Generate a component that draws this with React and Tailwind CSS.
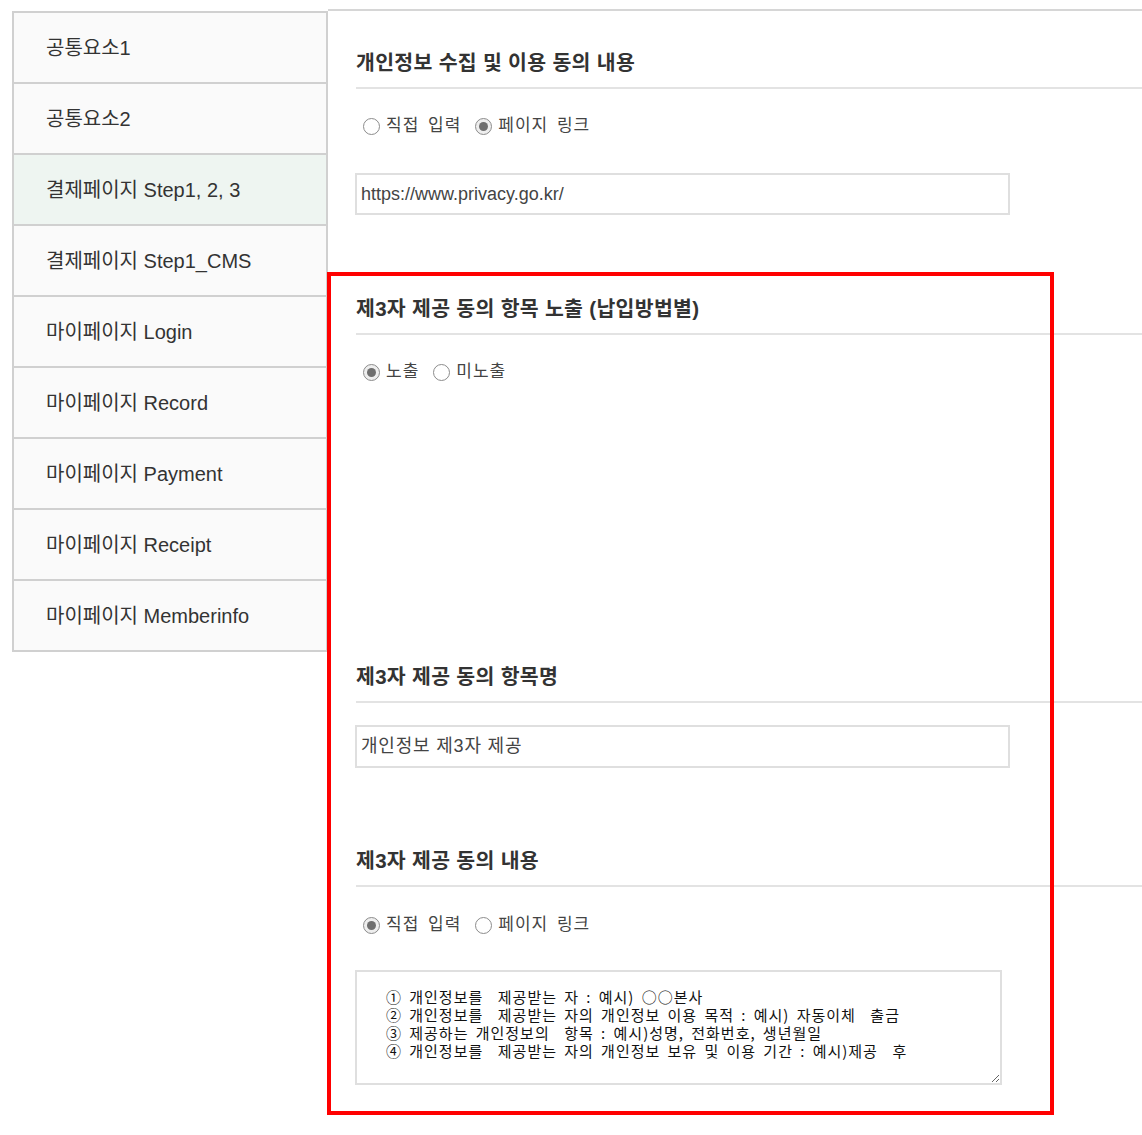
const NAV_ITEMS = [
  "공통요소1",
  "공통요소2",
  "결제페이지 Step1, 2, 3",
  "결제페이지 Step1_CMS",
  "마이페이지 Login",
  "마이페이지 Record",
  "마이페이지 Payment",
  "마이페이지 Receipt",
  "마이페이지 Memberinfo",
];

const CONSENT_TEXT = [
  "① 개인정보를  제공받는 자 : 예시) ○○본사",
  "② 개인정보를  제공받는 자의 개인정보 이용 목적 : 예시) 자동이체  출금",
  "③ 제공하는 개인정보의  항목 : 예시)성명, 전화번호, 생년월일",
  "④ 개인정보를  제공받는 자의 개인정보 보유 및 이용 기간 : 예시)제공  후",
].join("\n");

// Grey native-looking radio
function Radio({ checked, label }) {
  return (
    <label className="flex items-center gap-[6px]">
      <span
        className={`w-[17px] h-[17px] rounded-full border-[1.5px] border-[#8c8c8c] flex items-center justify-center ${
          checked ? "bg-[#eeeeee]" : "bg-white"
        }`}
      >
        {checked && <span className="w-[9px] h-[9px] rounded-full bg-[#6f6f6f]" />}
      </span>
      <span className="text-[17px] tracking-[1px] [word-spacing:3px] text-[#444] leading-[20px]">
        {label}
      </span>
    </label>
  );
}

function RadioRow({ options, selected }) {
  return (
    <div className="flex items-center gap-[14px] pl-[7px] h-[20px]">
      {options.map((o) => (
        <Radio key={o} label={o} checked={o === selected} />
      ))}
    </div>
  );
}

function SectionTitle({ children }) {
  return (
    <div>
      <h3 className="h-[28px] leading-[28px] text-[20.5px] font-bold tracking-[0.3px] text-[#333]">
        {children}
      </h3>
      <div className="mt-[10px] h-[2px] bg-[#e3e3e3]" />
    </div>
  );
}

function TextBox({ value, className = "" }) {
  return (
    <div
      className={`w-[655px] border-2 border-[#dfdfdf] bg-white flex items-center px-[4px] text-[18px] text-[#444] ${className}`}
    >
      {value}
    </div>
  );
}

export default function App() {
  return (
    <div className="relative w-[1142px] h-[1135px] bg-white overflow-hidden font-['Liberation_Sans','Noto_Sans_CJK_KR',sans-serif]">
      <div className="flex items-start pt-[9px] pl-[12px]">
        {/* Sidebar menu */}
        <nav className="w-[316px] shrink-0 mt-[2px] border-x-2 border-t-2 border-[#d0d0d0]">
          {NAV_ITEMS.map((item, i) => (
            <div
              key={item}
              className={`h-[71px] border-b-2 border-[#d0d0d0] flex items-center pl-[32px] text-[20px] text-[#333] ${
                i === 2 ? "bg-[#eef5f1]" : "bg-[#fafafa]"
              }`}
            >
              {item}
            </div>
          ))}
        </nav>

        {/* Settings panel */}
        <main className="flex-1 border-t-2 border-[#d6d6d6] pl-[28px]">
          <section className="mt-[38px]">
            <SectionTitle>개인정보 수집 및 이용 동의 내용</SectionTitle>
            <div className="mt-[27px]">
              <RadioRow options={["직접 입력", "페이지 링크"]} selected="페이지 링크" />
            </div>
            <div className="mt-[37px] -ml-[1px]">
              <TextBox value="https://www.privacy.go.kr/" className="h-[42px]" />
            </div>
          </section>

          <section className="mt-[80px]">
            <SectionTitle>제3자 제공 동의 항목 노출 (납입방법별)</SectionTitle>
            <div className="mt-[27px]">
              <RadioRow options={["노출", "미노출"]} selected="노출" />
            </div>
          </section>

          <section className="mt-[281px]">
            <SectionTitle>제3자 제공 동의 항목명</SectionTitle>
            <div className="mt-[22px] -ml-[1px]">
              <TextBox value="개인정보 제3자 제공" className="h-[43px] tracking-[0.8px]" />
            </div>
          </section>

          <section className="mt-[79px]">
            <SectionTitle>제3자 제공 동의 내용</SectionTitle>
            <div className="mt-[28px]">
              <RadioRow options={["직접 입력", "페이지 링크"]} selected="직접 입력" />
            </div>
            <div className="mt-[35px] -ml-[1px]">
              <textarea
                readOnly
                defaultValue={CONSENT_TEXT}
                className="block w-[647px] h-[115px] border-2 border-[#dfdfdf] bg-white pt-[16px] pl-[29px] pr-[8px] text-[15px] leading-[18px] tracking-[1px] [word-spacing:2.9px] text-[#111] outline-none font-['Noto_Sans_CJK_KR',sans-serif]"
              />
            </div>
          </section>
        </main>
      </div>

      {/* red highlight annotation */}
      <div className="absolute left-[327px] top-[272px] w-[727px] h-[843px] border-4 border-[#ff0000] pointer-events-none" />
    </div>
  );
}
